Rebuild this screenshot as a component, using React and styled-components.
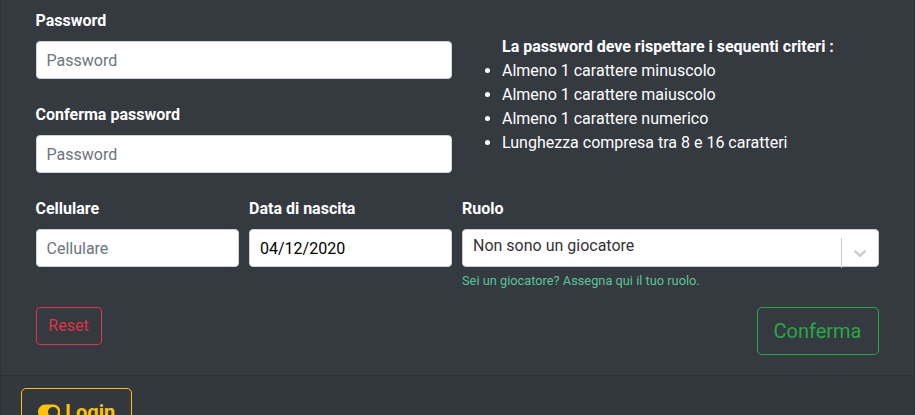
import React from 'react';
import styled, { createGlobalStyle } from 'styled-components';
import { FaToggleOn } from 'react-icons/fa';

const GlobalStyle = createGlobalStyle`
  *, *::before, *::after { box-sizing: border-box; }
  body {
    margin: 0;
    overflow: hidden;
    background: #343a40;
    font-family: Roboto, sans-serif;
    font-size: 16px;
    line-height: 24px;
    color: #fff;
  }
`;

const Card = styled.main`
  height: 415px;
  overflow: hidden;
  display: flex;
  flex-direction: column;
  background: #343a40;
  border: solid rgba(0, 0, 0, 0.125);
  border-width: 0 1px;
`;

const Form = styled.form`
  flex: none;
  height: 375px;
  padding: 9px 35px 0;
`;

const TopRow = styled.div`
  display: grid;
  grid-template-columns: 416px 1fr;
  column-gap: 10px;
  height: 188px;
`;

const FieldRow = styled.div`
  display: grid;
  grid-template-columns: 203px 203px 417px;
  column-gap: 10px;
  height: 110px;
`;

const Field = styled.div`
  height: 94px;
`;

const Label = styled.label`
  display: block;
  height: 24px;
  margin: 0 0 8px ${(p) => (p.$flush ? 0 : -0.5)}px;
  font-weight: 700;
`;

const Input = styled.input`
  display: block;
  width: 100%;
  height: 38px;
  padding: 6px ${(p) => (p.$wide ? 10 : 9.5)}px;
  border: 1px solid #ced4da;
  border-radius: 4px;
  background: #fff;
  color: #000;
  font: inherit;
  &::placeholder { color: #6c757d; opacity: 1; }
`;

const Criteria = styled.ul`
  margin: 0;
  padding: 26px 0 0 40px;
`;

const CriteriaTitle = styled.li`
  list-style: none;
  font-weight: 700;
`;

const Select = styled.div`
  display: flex;
  height: 38px;
  border: 1px solid #ccc;
  border-radius: 4px;
  background: #fff;
  color: #333;
`;

const SelectValue = styled.span`
  flex: 1;
  padding: 4px 10px;
`;

const Separator = styled.span`
  width: 1px;
  height: 30px;
  margin-top: 8px;
  background: #ccc;
`;

const Chevron = styled.svg`
  width: 20px;
  height: 20px;
  margin: 13px 8px 0 8px;
  fill: #ccc;
`;

const Hint = styled.small`
  display: block;
  margin-top: 4px;
  font-size: 12.8px;
  line-height: 19px;
  color: #5bc299;
`;

const Actions = styled.div`
  display: flex;
  justify-content: space-between;
  align-items: flex-start;
`;

const Button = styled.button`
  flex: none;
  display: flex;
  align-items: center;
  justify-content: center;
  gap: 5px;
  width: ${(p) => p.$width}px;
  height: ${(p) => (p.$large ? 48 : 38)}px;
  padding: 0 ${(p) => (p.$bold ? 0 : 1)}px 0 0;
  border: 1px solid ${(p) => p.$color};
  border-radius: ${(p) => (p.$large ? 5 : 4)}px;
  background: transparent;
  color: ${(p) => p.$color};
  font-family: inherit;
  font-size: ${(p) => (p.$large ? 20 : 16)}px;
  font-weight: ${(p) => (p.$bold ? 700 : 400)};
  line-height: ${(p) => (p.$large ? 30 : 24)}px;
`;

const Footer = styled.footer`
  flex: none;
  height: 72px;
  padding: 12px 20px;
  border-top: 1px solid rgba(0, 0, 0, 0.125);
  background: rgba(0, 0, 0, 0.03);
`;

const ToggleIcon = styled(FaToggleOn)`
  width: 22.5px;
  height: 20px;
`;

export default function App() {
  return (
    <>
      <GlobalStyle />
      <Card>
        <Form>
          <TopRow>
            <div>
              <Field>
                <Label htmlFor="password">Password</Label>
                <Input id="password" type="password" placeholder="Password" />
              </Field>
              <Field>
                <Label htmlFor="confirm">Conferma password</Label>
                <Input id="confirm" type="password" placeholder="Password" />
              </Field>
            </div>
            <Criteria>
              <CriteriaTitle>La password deve rispettare i sequenti criteri :</CriteriaTitle>
              <li>Almeno 1 carattere minuscolo</li>
              <li>Almeno 1 carattere maiuscolo</li>
              <li>Almeno 1 carattere numerico</li>
              <li>Lunghezza compresa tra 8 e 16 caratteri</li>
            </Criteria>
          </TopRow>
          <FieldRow>
            <Field>
              <Label htmlFor="phone">Cellulare</Label>
              <Input id="phone" placeholder="Cellulare" />
            </Field>
            <Field>
              <Label htmlFor="birth" $flush>Data di nascita</Label>
              <Input id="birth" $wide defaultValue="04/12/2020" />
            </Field>
            <Field>
              <Label $flush>Ruolo</Label>
              <Select>
                <SelectValue>Non sono un giocatore</SelectValue>
                <Separator />
                <Chevron viewBox="0 0 20 20" aria-hidden="true">
                  <path d="M4.516 7.548c0.436-0.446 1.043-0.481 1.576 0l3.908 3.747 3.908-3.747c0.533-0.481 1.141-0.446 1.574 0 0.436 0.445 0.408 1.197 0 1.615-0.406 0.418-4.695 4.502-4.695 4.502-0.217 0.223-0.502 0.335-0.787 0.335s-0.57-0.112-0.789-0.335c0 0-4.287-4.084-4.695-4.502s-0.436-1.17 0-1.615z" />
                </Chevron>
              </Select>
              <Hint>Sei un giocatore? Assegna qui il tuo ruolo.</Hint>
            </Field>
          </FieldRow>
          <Actions>
            <Button type="reset" $color="#dc3545" $width={66}>Reset</Button>
            <Button type="button" $color="#28a745" $width={122} $large>Conferma</Button>
          </Actions>
        </Form>
        <Footer>
          <Button type="button" $color="#ffc107" $width={111} $large $bold>
            <ToggleIcon />
            Login
          </Button>
        </Footer>
      </Card>
    </>
  );
}
